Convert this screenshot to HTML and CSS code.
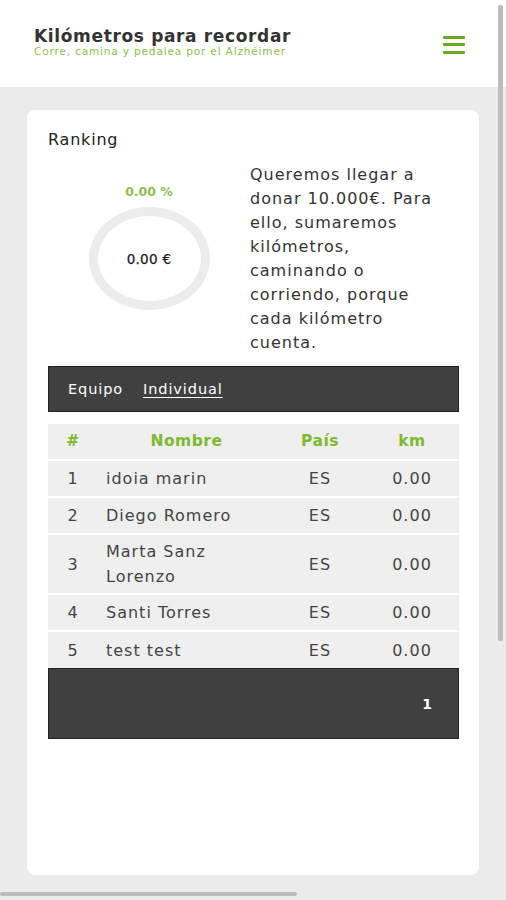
FILE: index.html
```html
<!DOCTYPE html>
<html lang="es">
<head>
<meta charset="utf-8">
<title>Kilómetros para recordar</title>
<link rel="stylesheet" href="styles.css">
</head>
<body>
<header class="topbar">
  <div class="brand">
    <div class="brand-title">Kilómetros para recordar</div>
    <div class="brand-sub">Corre, camina y pedalea por el Alzhéimer</div>
  </div>
  <button class="menu" aria-label="Menú">
    <span></span><span></span><span></span>
  </button>
</header>
<main class="page">
  <section class="card">
    <h2 class="card-title">Ranking</h2>
    <div class="summary">
      <div class="gauge">
        <div class="gauge-pct">0.00 %</div>
        <div class="ring"><span class="ring-val">0.00 €</span></div>
      </div>
      <p class="intro">Queremos llegar a<br>donar 10.000€. Para<br>ello, sumaremos<br>kilómetros,<br>caminando o<br>corriendo, porque<br>cada kilómetro<br>cuenta.</p>
    </div>
    <nav class="tabs">
      <a class="tab">Equipo</a>
      <a class="tab active">Individual</a>
    </nav>
    <table class="rank">
      <thead>
        <tr><th class="c-pos">#</th><th class="c-name">Nombre</th><th class="c-ctry">País</th><th class="c-km">km</th></tr>
      </thead>
      <tbody>
        <tr><td class="c-pos">1</td><td class="c-name">idoia marin</td><td class="c-ctry">ES</td><td class="c-km">0.00</td></tr>
        <tr><td class="c-pos">2</td><td class="c-name">Diego Romero</td><td class="c-ctry">ES</td><td class="c-km">0.00</td></tr>
        <tr><td class="c-pos">3</td><td class="c-name">Marta Sanz<br>Lorenzo</td><td class="c-ctry">ES</td><td class="c-km">0.00</td></tr>
        <tr><td class="c-pos">4</td><td class="c-name">Santi Torres</td><td class="c-ctry">ES</td><td class="c-km">0.00</td></tr>
        <tr><td class="c-pos">5</td><td class="c-name">test test</td><td class="c-ctry">ES</td><td class="c-km">0.00</td></tr>
      </tbody>
    </table>
    <div class="pager"><span class="page-num">1</span></div>
  </section>
</main>
<div class="scroll-v"></div>
<div class="scroll-h"></div>
</body>
</html>
```
FILE: styles.css
```css
* { box-sizing: border-box; }
html, body { margin: 0; padding: 0; }
body {
  width: 506px;
  min-height: 900px;
  background: #ebebeb;
  font-family: "DejaVu Sans", "Open Sans", sans-serif;
  color: #333;
  overflow: hidden;
}
.topbar {
  height: 87px;
  background: #fff;
  display: flex;
  align-items: center;
  justify-content: space-between;
  padding: 0 41px 0 34px;
}
.brand { margin-top: -4px; }
.brand-title {
  font-weight: bold;
  font-size: 17px;
  letter-spacing: 0.65px;
  color: #333;
  line-height: 18px;
}
.brand-sub {
  font-size: 10.5px;
  letter-spacing: 0.85px;
  color: #8cc04a;
  line-height: 12px;
}
.menu {
  width: 22px;
  height: 18px;
  padding: 0;
  border: 0;
  background: none;
  display: flex;
  flex-direction: column;
  justify-content: space-between;
  margin-top: 2px;
}
.menu span {
  display: block;
  height: 3px;
  background: #67aa1c;
  border-radius: 1px;
}
.page { padding: 23px 27px 25px; }
.card {
  background: #fff;
  border-radius: 8px;
  min-height: 765px;
  padding: 20px 20px 20px 21px;
}
.card-title {
  margin: 0;
  font-size: 16px;
  font-weight: normal;
  color: #222;
  letter-spacing: 0.8px;
  line-height: 20px;
}
.summary {
  display: flex;
  margin-top: 13px;
}
.gauge {
  width: 202px;
  display: flex;
  flex-direction: column;
  align-items: center;
  padding-top: 21px;
}
.gauge-pct {
  font-size: 12.5px;
  color: #8cc04a;
  font-weight: bold;
  line-height: 16px;
  margin-bottom: 7px;
}
.ring {
  width: 121px;
  height: 103px;
  border-radius: 50%;
  border: 9px solid #ececec;
  display: flex;
  align-items: center;
  justify-content: center;
}
.ring-val { font-size: 13.5px; color: #1a1a1a; letter-spacing: 0.3px; -webkit-text-stroke: 0.25px #1a1a1a; }
.intro {
  margin: 0;
  font-size: 16px;
  line-height: 24px;
  color: #333;
  letter-spacing: 1px;
}
.tabs {
  margin-top: 11px;
  height: 46px;
  background: #404040;
  border: 1px solid #222;
  display: flex;
  align-items: center;
  gap: 20px;
  padding: 0 19px;
}
.tab { color: #fff; font-size: 14.5px; letter-spacing: 0.9px; }
.tab.active { text-decoration: underline; text-underline-offset: 3px; }
.rank {
  width: 100%;
  margin-top: 12px;
  border-collapse: collapse;
  font-size: 16px;
  letter-spacing: 1px;
}
.rank th, .rank td {
  background: #efefef;
  border-top: 2px solid #fff;
  padding: 0 6px;
  height: 37px;
  line-height: 25px;
  font-weight: normal;
}
.rank thead th { border-top: 0; height: 36px; color: #7cba2e; font-weight: bold; font-size: 15.5px; letter-spacing: 0.5px; }
.rank td { color: #444; }
.rank td.c-name { padding-top: 4px; padding-bottom: 4px; }
.c-pos { width: 50px; text-align: center; }
.c-name { width: 177px; text-align: left; }
.rank td.c-name { padding-left: 8px; }
.rank th.c-name { text-align: center; }
.c-ctry { width: 90px; text-align: center; }
.c-km { text-align: center; }
.pager {
  height: 71px;
  background: #404040;
  border: 1px solid #222;
  display: flex;
  align-items: center;
  justify-content: flex-end;
  padding-right: 26px;
}
.page-num { color: #fff; font-size: 14px; font-weight: bold; }
.scroll-v {
  position: fixed;
  top: 5px;
  left: 498px;
  width: 5px;
  height: 636px;
  background: #bdbdbd;
  border-radius: 2px;
}
.scroll-h {
  position: fixed;
  top: 892px;
  left: 0;
  width: 297px;
  height: 4px;
  background: #bdbdbd;
  border-radius: 2px;
}
```
